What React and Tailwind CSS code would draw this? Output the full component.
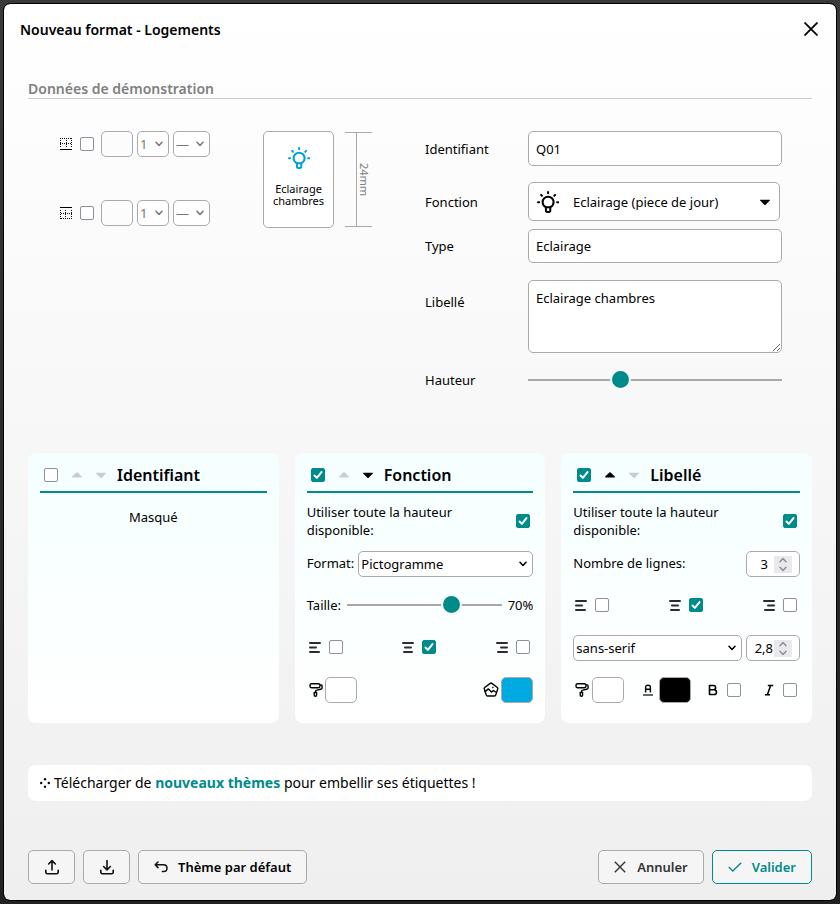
import React, { useState } from "react";

const TEAL = "#008b8b";

function BorderIcon({ top }) {
  return (
    <svg viewBox="0 0 12 12" className={"size-3 " + (top ? "rotate-180" : "")} fill="none" stroke="#111" shapeRendering="crispEdges" aria-hidden="true">
      <path d="M0 .5h12M0 5.500h12" strokeDasharray="1 1" />
      <path d="M.5 0v10M6.500 0v10M11.500 0v10" strokeDasharray="1 1" />
      <path d="M0 11.500h12" stroke="#000" />
    </svg>
  );
}

function Bulb({ className }) {
  return (
    <svg viewBox="0 0 22 22" className={className} fill="none" stroke="currentColor" strokeWidth="2" strokeLinecap="round" strokeLinejoin="round" aria-hidden="true">
      <path d="M8.9 16.2C7 15.1 5.6 13.400 5.600 11.200a5.500 5.500 0 0 1 11 0c0 2.200-1.400 3.900-3.300 5z" />
      <path d="M8.900 16.200v3.100c0 1 .6 1.600 1.500 1.600h1.400c.9 0 1.500-.6 1.500-1.600v-3.100" />
      <path d="M11.100 1v1.200M4.100 3.900l.8.800M18.100 3.900l-.8.800M1 11.200h1.100M20.100 11.200h1.100" />
    </svg>
  );
}

function Caret({ up, className }) {
  return (
    <svg viewBox="0 0 10 6" className={className} fill="currentColor" aria-hidden="true">
      {up ? <path d="M4.300.5a1 1 0 0 1 1.400 0L9.800 4.600V5.500H.2V4.600z" /> : <path d="M4.300 5.800a1 1 0 0 0 1.400 0L9.800 1.600V.8H.2v.8z" />}
    </svg>
  );
}

function Chevron({ className }) {
  return (
    <svg viewBox="0 0 8 6" className={className} fill="none" stroke="currentColor" strokeWidth="1.500" strokeLinecap="round" strokeLinejoin="round" aria-hidden="true">
      <path d="M1 1.200l3 3.300 3-3.300" />
    </svg>
  );
}

function AlignIcon({ side }) {
  const d = {
    left: "M1 2h10M1 6.500h6M1 11h9",
    center: "M1 2h10M3 6.500h6M2 11h8",
    right: "M1 2h10M5 6.500h6M2 11h9",
  };
  return (
    <svg viewBox="0 0 12 13" className="h-[13px] w-3" fill="none" stroke="#2c2c2c" strokeWidth="2" strokeLinecap="round" aria-hidden="true">
      <path d={d[side]} />
    </svg>
  );
}

function Roller() {
  return (
    <svg viewBox="0 0 14 16" className="h-4 w-[14px]" fill="none" stroke="#000" strokeWidth="1.400" strokeLinejoin="round" aria-hidden="true">
      <rect x="1" y="1.700" width="10" height="4" rx="1.600" />
      <path d="M11 2.900h1.200c.6 0 .9.400.9 1v1.900c0 .9-.5 1.400-1.400 1.500l-4 .8c-.8.100-1.100.5-1.100 1.100v.8" />
      <path d="M5.200 10.500h2.400v2.500a1.200 1.200 0 0 1-2.400 0z" />
    </svg>
  );
}

function Pentagon() {
  return (
    <svg viewBox="0 0 16 16" className="size-4" fill="none" stroke="#000" strokeWidth="1.400" strokeLinejoin="round" strokeLinecap="round" aria-hidden="true">
      <path d="M7.200 1.400a1.300 1.300 0 0 1 1.600 0l5.500 4.100c.4.300.6.900.4 1.400l-2 6.200c-.2.600-.7.900-1.200.9h-7c-.5 0-1-.3-1.200-.9l-2-6.200c-.2-.5 0-1.100.4-1.400z" />
      <path d="M2 9.600l3.400-2.700 3.100 3.200 1.900-1.600 3.200 2" />
      <path d="M9.800 5.500h.2" />
    </svg>
  );
}

function FontColor() {
  return (
    <svg viewBox="0 0 12 12" className="size-3" fill="none" stroke="#000" strokeWidth="1.400" aria-hidden="true">
      <path d="M3.600 8.600V3.200C3.600 1.900 4.500 1.200 6 1.200s2.400.7 2.400 2v5.400M3.600 5.200h4.800" />
      <path d="M1 11h10" strokeWidth="1.200" />
    </svg>
  );
}

function BoldIcon() {
  return (
    <svg viewBox="0 0 10 12" className="h-3 w-[10px]" fill="none" stroke="#000" strokeWidth="1.600" strokeLinejoin="round" aria-hidden="true">
      <path d="M1.500 1.500h4a2.100 2.100 0 0 1 0 4.300h-4zM1.500 5.800h4.600a2.300 2.300 0 0 1 0 4.700H1.500z" />
    </svg>
  );
}

function ItalicIcon() {
  return (
    <svg viewBox="0 0 10 12" className="h-3 w-[10px]" fill="none" stroke="#000" strokeWidth="1.500" aria-hidden="true">
      <path d="M3.800 1.400h5.400M1 10.800h5M6.600 1.400l-3.200 9.400" />
    </svg>
  );
}

function TrayArrow({ down }) {
  return (
    <svg viewBox="0 0 16 16" className="size-4" fill="none" stroke="#111" strokeWidth="1.600" strokeLinecap="round" strokeLinejoin="round" aria-hidden="true">
      <path d="M1.800 11.300v2a1.400 1.400 0 0 0 1.400 1.400h9.600a1.400 1.400 0 0 0 1.400-1.400v-2" />
      {down ? <path d="M8 1.500v9.300M4.600 7.500L8 10.900l3.400-3.400" /> : <path d="M8 11V1.600M4.600 5L8 1.600 11.400 5" />}
    </svg>
  );
}

function Check({ label, checked = false }) {
  const [on, setOn] = useState(checked);
  return (
    <label className="grid size-[14px] shrink-0 place-items-center">
      <input
        type="checkbox"
        aria-label={label}
        checked={on}
        onChange={() => setOn(!on)}
        className="col-start-1 row-start-1 size-[14px] appearance-none rounded-[2px] border border-[#8f8f9d] bg-white checked:border-[#008b8b] checked:bg-[#008b8b]"
      />
      {on && (
        <svg viewBox="0 0 14 14" className="pointer-events-none col-start-1 row-start-1 size-[14px]" fill="none" stroke="#fff" strokeWidth="2" strokeLinecap="round" strokeLinejoin="round" aria-hidden="true">
          <path d="M3.500 7.500l2.400 2.400 4.600-5.800" />
        </svg>
      )}
    </label>
  );
}

function Select({ label, options, className, muted }) {
  return (
    <div className={"grid h-[26px] items-center rounded-[5px] border border-[#aaa] bg-white " + (muted ? "text-[#777] " : "text-black ") + className}>
      <select aria-label={label} className="col-start-1 row-start-1 h-full w-full min-w-0 appearance-none bg-transparent px-[2px] pb-px outline-none">
        {options.map((o) => (
          <option key={o}>{o}</option>
        ))}
      </select>
      <Chevron className="pointer-events-none col-start-1 row-start-1 mr-[5px] h-[6px] w-2 justify-self-end" />
    </div>
  );
}

function Slider({ id, label, value, className }) {
  const [v, setV] = useState(value);
  return (
    <input
      id={id}
      type="range"
      aria-label={label}
      value={v}
      onChange={(e) => setV(e.target.value)}
      className={
        "h-[21px] min-w-0 appearance-none bg-transparent [&::-webkit-slider-runnable-track]:h-[2px] [&::-webkit-slider-runnable-track]:bg-[#a8a8a8] [&::-webkit-slider-thumb]:-mt-[10px] [&::-webkit-slider-thumb]:size-[21px] [&::-webkit-slider-thumb]:appearance-none [&::-webkit-slider-thumb]:rounded-full [&::-webkit-slider-thumb]:border-2 [&::-webkit-slider-thumb]:border-[#f9fbfb] [&::-webkit-slider-thumb]:bg-[#008b8b] " +
        className
      }
    />
  );
}

function Spinner({ label, value }) {
  const [v, setV] = useState(value);
  return (
    <div className="flex h-[26px] w-[54px] shrink-0 items-center rounded-[5px] border border-[#aaa] bg-white pr-[7px]">
      <input type="text" inputMode="decimal" aria-label={label} value={v} onChange={(e) => setV(e.target.value)} className="h-full min-w-0 flex-1 bg-transparent pb-px text-right outline-none" />
      <span className={"flex h-[17px] w-[18px] shrink-0 flex-col items-center justify-center gap-[3px] bg-[#e9e9ed] text-[#8f8f9d] " + (value.length > 1 ? "ml-px" : "ml-[6px]")}>
        <Chevron className="h-[6px] w-2 rotate-180" />
        <Chevron className="h-[6px] w-2" />
      </span>
    </div>
  );
}

function Swatch({ label, className }) {
  return <button type="button" aria-label={label} className={"h-[26px] w-8 shrink-0 rounded-[5px] border border-[#aaa] " + className} />;
}

function BorderRow({ icon, name }) {
  return (
    <div className="flex items-center">
      {icon}
      <div className="mr-[7px] ml-2">
        <Check label={name} />
      </div>
      <div className="flex gap-1">
        <Swatch label={name + " couleur"} className="bg-[#fcfcfc]" />
        <Select label={name + " épaisseur"} options={["1", "2", "3"]} className="w-8" muted />
        <Select label={name + " style"} options={["—", "┄"]} className="w-[37px]" muted />
      </div>
    </div>
  );
}

function Alignments({ name }) {
  return (
    <div className="flex h-[26px] items-center justify-between pr-[3px] pb-[2px] pl-[2px]">
      {["left", "center", "right"].map((side) => (
        <div key={side} className="flex items-center gap-2">
          <AlignIcon side={side} />
          <Check label={name + " " + side} checked={side === "center"} />
        </div>
      ))}
    </div>
  );
}

function Card({ title, checked, up, down, children }) {
  return (
    <section className="min-w-0 rounded-lg bg-linear-to-b from-[#f5ffff] to-white px-3 pt-3 pb-5">
      <header className="flex h-7 items-start border-b-2 border-[#008b8b] pl-1">
        <div className="flex h-5 items-center">
          <Check label={title} checked={checked} />
          <button type="button" aria-label="Monter" className={"ml-[14px] " + (up ? "text-black" : "text-[#ccc]")}>
            <Caret up className="h-[6px] w-[10px]" />
          </button>
          <button type="button" aria-label="Descendre" className={"ml-[14px] " + (down ? "text-black" : "text-[#ccc]")}>
            <Caret className="h-[6px] w-[10px]" />
          </button>
          <h3 className="ml-[11px] text-base leading-5 font-semibold">{title}</h3>
        </div>
      </header>
      {children}
    </section>
  );
}

function FullHeight({ name }) {
  return (
    <div className="mt-[10px] mb-3 flex items-center justify-between pr-[3px]">
      <span className="w-[160px]">Utiliser toute la hauteur disponible:</span>
      <Check label={name + " : utiliser toute la hauteur disponible"} checked />
    </div>
  );
}

const field = "w-full rounded-[5px] border border-[#aaa] bg-white px-[7px] outline-none";
const button = "flex h-[34px] items-center justify-center rounded-[5px] border bg-[#f5f5f5] text-[13px] font-semibold";

export default function App() {
  return (
    <div className="min-h-screen bg-linear-to-b from-[#3a3a3a] via-[#2b2b2b] to-[#222] p-1 font-['Noto_Sans',sans-serif] text-[13px] leading-[18px] text-black">
      <div role="dialog" aria-label="Nouveau format - Logements" className="rounded-md bg-linear-to-b from-white to-[#efefef] pb-4 outline outline-black">
        <header className="flex h-[50px] items-center justify-between px-4">
          <h1 className="pt-px text-sm leading-5 font-semibold">Nouveau format - Logements</h1>
          <button type="button" aria-label="Fermer" className="mr-[2px]">
            <svg viewBox="0 0 14 14" className="size-[14px]" stroke="#000" strokeWidth="1.800" aria-hidden="true">
              <path d="M.5.5l13 13M13.500.5l-13 13" />
            </svg>
          </button>
        </header>

        <main className="px-6 pt-[25px]">
          <h2 className="border-b border-[#ccc] text-sm leading-[19px] font-semibold text-[#808080]">Données de démonstration</h2>

          <div className="mt-8 flex">
            <div className="flex h-[97px] w-[397px] shrink-0 pl-8">
              <div className="flex h-[95px] flex-col justify-between">
                <BorderRow icon={<BorderIcon />} name="Bordure basse" />
                <BorderRow icon={<BorderIcon top />} name="Bordure haute" />
              </div>
              <div className="ml-[53px] flex w-[71px] flex-col items-center rounded-[5px] border border-[#aaa] bg-white pt-[15px] text-center text-[11px] leading-3">
                <Bulb className="mb-[14px] size-[22px] text-[#009fdb]" />
                <p>Eclairage chambres</p>
              </div>
              <div className="my-px ml-[11px] flex w-[27px] items-center border-y border-[#aaa] pl-[11px]">
                <div className="flex h-full items-center border-l border-[#aaa]">
                  <span className="text-[11px] leading-[14px] text-[#808080] [writing-mode:vertical-rl]">24mm</span>
                </div>
              </div>
            </div>

            <div className="grid flex-1 grid-cols-[103px_1fr] items-center pr-[30px]">
              <label htmlFor="ident">Identifiant</label>
              <input id="ident" defaultValue="Q01" className={field + " h-[35px]"} />

              <label htmlFor="fonction" className="mt-4">Fonction</label>
              <div className="mt-4 mr-[2px] grid h-[39px] items-center rounded-[5px] border border-[#aaa] bg-white">
                <select id="fonction" className="col-start-1 row-start-1 h-full w-full appearance-none bg-transparent pl-11 outline-none">
                  <option>Eclairage (piece de jour)</option>
                </select>
                <Bulb className="pointer-events-none col-start-1 row-start-1 ml-2 size-[22px]" />
                <Caret className="pointer-events-none col-start-1 row-start-1 mr-[9px] h-[6px] w-[10px] justify-self-end" />
              </div>

              <label htmlFor="type" className="mt-2">Type</label>
              <input id="type" defaultValue="Eclairage" className={field + " mt-2 h-[34px]"} />

              <label htmlFor="libelle" className="mt-3 self-start pt-[18px]">Libellé</label>
              <textarea id="libelle" defaultValue="Eclairage chambres" className={field + " mt-[17px] block h-[73px] resize-y pt-2"} />

              <label htmlFor="hauteur" className="mt-4">Hauteur</label>
              <Slider id="hauteur" label="Hauteur" value={35} className="mt-4 w-full" />
            </div>
          </div>

          <div className="mt-[63px] grid grid-cols-3 gap-4">
            <Card title="Identifiant">
              <p className="mt-[15px] text-center">Masqué</p>
            </Card>

            <Card title="Fonction" checked down>
              <FullHeight name="Fonction" />
              <div className="flex flex-col gap-4">
                <div className="flex items-center gap-1">
                  <span className="pb-[2px]">Format:</span>
                  <Select label="Format" options={["Pictogramme", "Texte"]} className="flex-1" />
                </div>
                <div className="flex h-[26px] items-center gap-[6px] pb-[2px]">
                  <label htmlFor="taille">Taille:</label>
                  <Slider id="taille" label="Taille" value={70} className="flex-1" />
                  <span>70%</span>
                </div>
                <Alignments name="Fonction" />
                <div className="flex items-center justify-between">
                  <div className="flex items-center gap-[2px] pl-[2px]">
                    <Roller />
                    <Swatch label="Couleur de fond" className="bg-white" />
                  </div>
                  <div className="flex items-center gap-[2px]">
                    <Pentagon />
                    <Swatch label="Couleur du pictogramme" className="bg-[#00a9e0]" />
                  </div>
                </div>
              </div>
            </Card>

            <Card title="Libellé" checked up>
              <FullHeight name="Libellé" />
              <div className="flex flex-col gap-4">
                <div className="flex items-center justify-between">
                  <span className="pb-[2px]">Nombre de lignes:</span>
                  <Spinner label="Nombre de lignes" value="3" />
                </div>
                <Alignments name="Libellé" />
                <div className="flex items-center gap-1">
                  <Select label="Police" options={["sans-serif", "serif"]} className="min-w-0 flex-1" />
                  <Spinner label="Taille de police" value="2,8" />
                </div>
                <div className="flex items-center justify-between pr-[3px] pl-[2px]">
                  <div className="flex items-center gap-[3px]">
                    <Roller />
                    <Swatch label="Fond du texte" className="bg-white" />
                  </div>
                  <div className="flex items-center gap-[5px]">
                    <FontColor />
                    <Swatch label="Couleur du texte" className="bg-black" />
                  </div>
                  <div className="flex items-center gap-[9px]">
                    <BoldIcon />
                    <Check label="Gras" />
                  </div>
                  <div className="flex items-center gap-[9px] pl-[5px]">
                    <ItalicIcon />
                    <Check label="Italique" />
                  </div>
                </div>
              </div>
            </Card>
          </div>

          <div className="mt-[42px] flex h-9 items-center gap-1 rounded-lg bg-white px-3 text-sm">
            <svg viewBox="0 0 10 10" className="size-[10px]" fill="#000" aria-hidden="true">
              <circle cx="5" cy="1.200" r="1.200" />
              <circle cx="1.200" cy="5" r="1.200" />
              <circle cx="8.800" cy="5" r="1.200" />
              <circle cx="5" cy="8.800" r="1.200" />
            </svg>
            <p>
              Télécharger de <a href="#themes" className="font-bold text-[#008b8b]">nouveaux thèmes</a> pour embellir ses étiquettes !
            </p>
          </div>

          <footer className="mt-[49px] flex gap-2">
            <button type="button" aria-label="Exporter" className={button + " w-[47px] border-[#aaa]"}>
              <TrayArrow />
            </button>
            <button type="button" aria-label="Importer" className={button + " w-[47px] border-[#aaa]"}>
              <TrayArrow down />
            </button>
            <button type="button" className={button + " gap-[10px] border-[#aaa] px-[15px]"}>
              <svg viewBox="0 0 14 12" className="h-3 w-[14px]" fill="none" stroke="#111" strokeWidth="1.500" strokeLinecap="round" strokeLinejoin="round" aria-hidden="true">
                <path d="M4 1L1.200 3.800 4 6.600M1.200 3.800h8.400a3.300 3.300 0 0 1 0 6.700H8.400" />
              </svg>
              Thème par défaut
            </button>
            <button type="button" className={button + " ml-auto gap-[11px] border-[#aaa] px-[15px] text-[#333]"}>
              <svg viewBox="0 0 12 12" className="size-3" stroke="#333" strokeWidth="1.400" aria-hidden="true">
                <path d="M.8.8l10.400 10.400M11.200.8L.8 11.200" />
              </svg>
              Annuler
            </button>
            <button type="button" className={button + " gap-[10px] border-[#008b8b] px-[15px] text-[#008b8b]"}>
              <svg viewBox="0 0 14 10" className="h-[10px] w-[14px]" fill="none" stroke={TEAL} strokeWidth="1.400" aria-hidden="true">
                <path d="M.8 5l4 4L13.200.8" />
              </svg>
              Valider
            </button>
          </footer>
        </main>
      </div>
    </div>
  );
}
